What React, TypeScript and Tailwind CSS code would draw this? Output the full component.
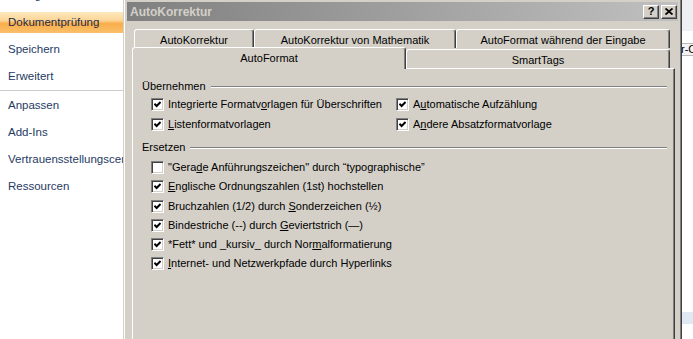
import type { ReactNode } from "react";

function Check() {
  return (
    <svg width="7" height="7" viewBox="0 0 7 7" className="block">
      <polyline points="0.4,2.8 2.6,5 6.6,1" fill="none" stroke="#000" strokeWidth="2" />
    </svg>
  );
}

function CheckBox({ checked }: { checked: boolean }) {
  return (
    <div className="flex h-[13px] w-[13px] shrink-0 items-center justify-center border border-t-[#808080] border-l-[#808080] border-b-white border-r-white bg-white shadow-[inset_1px_1px_0_#404040,inset_-1px_-1px_0_#d4d0c8]">
      {checked && <Check />}
    </div>
  );
}

function Option({ checked = true, children }: { checked?: boolean; children: ReactNode }) {
  return (
    <div className="flex items-center gap-[4px] whitespace-nowrap">
      <CheckBox checked={checked} />
      <span>{children}</span>
    </div>
  );
}

function GroupLabel({ text }: { text: string }) {
  return (
    <div className="flex h-[13px] items-center pl-[9px] pr-[7px]">
      <span>{text}</span>
      <div className="ml-[5px] h-[2px] flex-1 border-t border-b border-t-[#808080] border-b-white" />
    </div>
  );
}

function Tab({ label, width, selected = false }: { label: string; width: string; selected?: boolean }) {
  return (
    <div
      className={`${width} ${
        selected ? "relative z-10 -mb-px h-[22px] pb-px" : "h-[19px] pt-[2px]"
      } flex shrink-0 items-center justify-center rounded-t-[3px] border-t border-l border-r border-t-white border-l-white border-r-[#404040] bg-[#d4d0c8] shadow-[inset_-1px_0_0_#808080]`}
    >
      {label}
    </div>
  );
}

function TitleButton({ children }: { children: ReactNode }) {
  return (
    <div className="flex h-[14px] w-[16px] items-center justify-center border border-t-white border-l-white border-b-[#404040] border-r-[#404040] bg-[#d4d0c8] shadow-[inset_-1px_-1px_0_#808080] text-[11px] font-bold leading-none text-black">
      {children}
    </div>
  );
}

const sidebarItems = ["Speichern", "Erweitert"];
const sidebarItems2 = ["Anpassen", "Add-Ins", "Vertrauensstellungscenter", "Ressourcen"];

export default function App() {
  return (
    <div className="flex h-[339px] w-[693px] overflow-hidden bg-white font-['Liberation_Sans',Arial,sans-serif]">
      {/* Options sidebar */}
      <div className="w-[123px] shrink-0 overflow-hidden text-[11.5px] text-[#1f3b64]">
        <div className="-mt-[15px] flex flex-col">
          <div className="flex h-[21px] items-center whitespace-nowrap pl-[8px]">Häufig verwendet</div>
          <div className="mt-[6px] flex h-[21px] items-center whitespace-nowrap bg-[linear-gradient(to_bottom,#fde8bd_0%,#fcd597_40%,#f9ae4a_55%,#fac06a_100%)] pl-[8px] text-[#1b2a48]">
            Dokumentprüfung
          </div>
          {sidebarItems.map((item) => (
            <div key={item} className="mt-[6px] flex h-[21px] items-center whitespace-nowrap pl-[8px]">
              {item}
            </div>
          ))}
          <div className="mt-[3px] h-px bg-[#cccccc]" />
          {sidebarItems2.map((item, i) => (
            <div
              key={item}
              className={`${i === 0 ? "mt-[4px]" : "mt-[6px]"} flex h-[21px] items-center whitespace-nowrap pl-[8px]`}
            >
              {item}
            </div>
          ))}
        </div>
      </div>

      {/* AutoKorrektur dialog */}
      <div className="flex w-[559px] shrink-0 flex-col border-l border-r border-l-[#d4d0c8] border-r-[#404040] bg-[#d4d0c8] pt-[2px] text-[11px] text-black shadow-[inset_1px_0_0_#fff,inset_-1px_0_0_#808080]">
        <div className="mx-[3px] flex h-[19px] items-center justify-between bg-gradient-to-r from-[#808080] to-[#c0c0c0] pl-[3px] pr-[1px]">
          <span className="pt-px text-[12px] font-bold text-[#d4d0c8]">AutoKorrektur</span>
          <div className="flex gap-[2px]">
            <TitleButton>?</TitleButton>
            <TitleButton>
              <svg width="8" height="7" viewBox="0 0 8 7" className="block">
                <path d="M0.5 0.5L7.5 6.5M7.5 0.5L0.5 6.5" stroke="#000" strokeWidth="1.8" />
              </svg>
            </TitleButton>
          </div>
        </div>

        <div className="mt-[8px] flex pl-[10px]">
          <Tab label="AutoKorrektur" width="w-[120px]" />
          <Tab label="AutoKorrektur von Mathematik" width="w-[202px]" />
          <Tab label="AutoFormat während der Eingabe" width="w-[214px]" />
        </div>
        <div className="flex h-[20px] items-end pl-[8px]">
          <Tab label="AutoFormat" width="w-[274px]" selected />
          <Tab label="SmartTags" width="w-[264px]" />
        </div>

        <div className="ml-[8px] mr-[6px] h-[280px] border-t border-l border-r border-t-white border-l-white border-r-[#404040] shadow-[inset_-1px_0_0_#808080]">
          <div className="pt-[11px]">
            <GroupLabel text="Übernehmen" />
            <div className="mt-px grid grid-cols-[245px_1fr] pl-[18px]">
              <div className="flex h-[20px] items-center">
                <Option>
                  Integrierte Formatv<u>o</u>rlagen für Überschriften
                </Option>
              </div>
              <div className="flex h-[20px] items-center">
                <Option>
                  A<u>u</u>tomatische Aufzählung
                </Option>
              </div>
              <div className="flex h-[20px] items-center">
                <Option>
                  <u>L</u>istenformatvorlagen
                </Option>
              </div>
              <div className="flex h-[20px] items-center">
                <Option>
                  A<u>n</u>dere Absatzformatvorlage
                </Option>
              </div>
            </div>

            <div className="mt-[7px]">
              <GroupLabel text="Ersetzen" />
            </div>
            <div className="mt-[4px] flex flex-col pl-[18px]">
              <div className="flex h-[19px] items-center">
                <Option checked={false}>
                  "Gera<u>d</u>e Anführungszeichen" durch “typographische”
                </Option>
              </div>
              <div className="flex h-[19px] items-center">
                <Option>
                  <u>E</u>nglische Ordnungszahlen (1st) hochstellen
                </Option>
              </div>
              <div className="flex h-[20px] items-center">
                <Option>
                  Bruchzahlen (1/2) durch <u>S</u>onderzeichen (½)
                </Option>
              </div>
              <div className="flex h-[19px] items-center">
                <Option>
                  Bindestriche (--) durch <u>G</u>eviertstrich (—)
                </Option>
              </div>
              <div className="flex h-[19px] items-center">
                <Option>
                  *Fett* und _kursiv_ durch Nor<u>m</u>alformatierung
                </Option>
              </div>
              <div className="flex h-[19px] items-center">
                <Option>
                  <u>I</u>nternet- und Netzwerkpfade durch Hyperlinks
                </Option>
              </div>
            </div>
          </div>
        </div>
      </div>

      {/* window behind the dialog */}
      <div className="flex w-[11px] shrink-0 flex-col overflow-hidden text-[11px] text-black">
        <div className="h-[31px] bg-[#eef0f3]" />
        <div className="mt-[12px] flex h-[13px] items-center whitespace-nowrap border-t border-b border-[#b8b8b8] bg-[#f4f4f4] -ml-[1px]">
          r-C
        </div>
        <div className="mt-[256px] h-[12px] bg-[#dfe8f3]" />
      </div>
    </div>
  );
}
